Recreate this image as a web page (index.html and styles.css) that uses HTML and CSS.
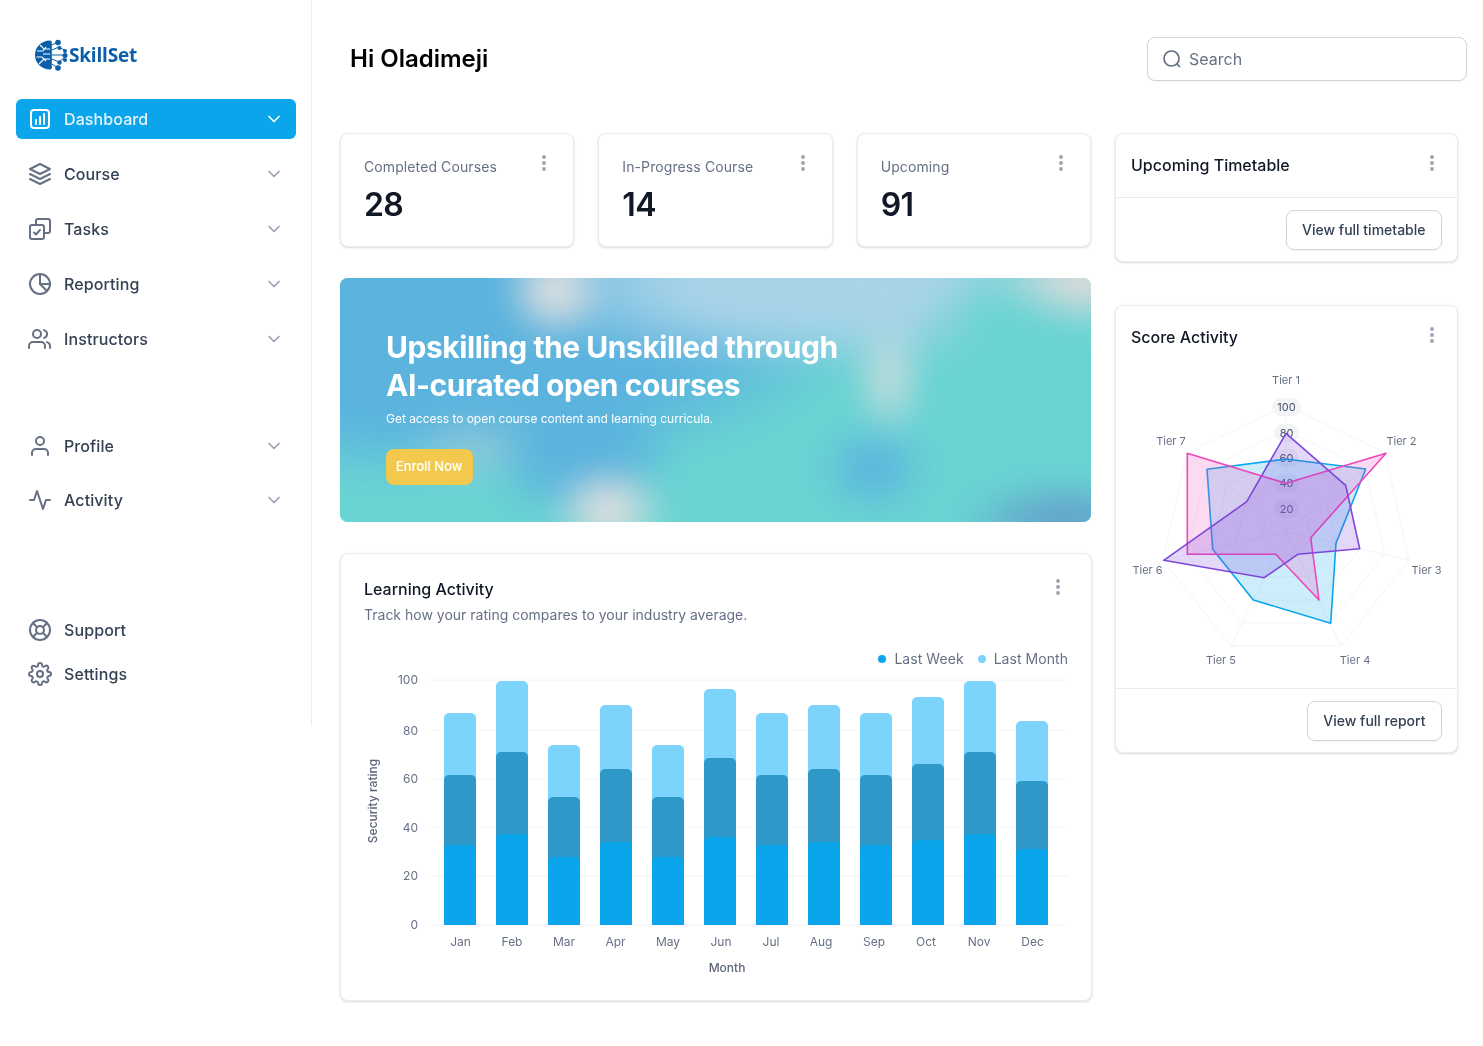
FILE: index.html
```html
<!DOCTYPE html>
<html>
<head>
  <meta charset="UTF-8">
  <title>SkillSet Dashboard</title>
  <link rel="stylesheet" href="styles.css">
</head>
<body>
  <svg class="defs" width="0" height="0">
    <symbol id="chevron" viewBox="0 0 20 20"><path d="M5 7.500l5 5 5-5"/></symbol>
    <symbol id="dots" viewBox="0 0 20 20">
      <circle cx="10" cy="4" r="1.900"/><circle cx="10" cy="10" r="1.900"/><circle cx="10" cy="16" r="1.900"/>
    </symbol>
    <clipPath id="barClip"><rect x="364" y="670" width="704" height="255"/></clipPath>
    <filter id="grain"><feTurbulence type="fractalNoise" baseFrequency="0.9" numOctaves="2"/><feColorMatrix type="saturate" values="0"/></filter>
  </svg>

  <div class="app">
    <aside class="sidebar">
      <div class="logo">
        <svg class="logo-mark" viewBox="0 0 34 32">
          <path class="logo-globe" d="M16 1.500C7.500 1.500 1 8 1 16s6.500 14.500 15 14.500c1 0 1.800-.8 1.800-1.800V3.300c0-1-.8-1.800-1.800-1.800z"/>
          <path class="logo-trace" d="M3 12h6l3-4M2.500 18H8l4 4M6 6l4 4h6M5 25l5-5h6M9 15h7"/>
          <path class="logo-link" d="M18 6l6-3M18 11l7-3M18 16h13M18 20l7 3M18 25l6 4M25 8l5 3M25 23l5-4"/>
          <circle class="logo-dot" cx="24" cy="3.500" r="2.800"/>
          <circle class="logo-dot" cx="25.500" cy="9" r="2"/>
          <circle class="logo-dot" cx="31" cy="12" r="2"/>
          <circle class="logo-dot" cx="31" cy="16.500" r="2.500"/>
          <circle class="logo-dot" cx="31" cy="21" r="2"/>
          <circle class="logo-dot" cx="25.500" cy="23.500" r="2.200"/>
          <circle class="logo-dot" cx="24" cy="29" r="2.800"/>
        </svg>
        <span class="logo-text">SkillSet</span>
      </div>

      <nav class="nav nav-main">
        <a class="nav-item active">
          <svg class="icon" viewBox="0 0 24 24"><rect x="3" y="3" width="18" height="18" rx="3"/><path d="M8 13v4M12 10v7M16 7v10"/></svg>
          <span>Dashboard</span>
          <svg class="chevron"><use href="#chevron"/></svg>
        </a>
        <a class="nav-item">
          <svg class="icon" viewBox="0 0 24 24"><path d="M12 2L2 7l10 5 10-5-10-5z"/><path d="M2 12l10 5 10-5"/><path d="M2 17l10 5 10-5"/></svg>
          <span>Course</span>
          <svg class="chevron"><use href="#chevron"/></svg>
        </a>
        <a class="nav-item">
          <svg class="icon" viewBox="0 0 24 24"><path d="M8 7.500V4a2 2 0 0 1 2-2h10a2 2 0 0 1 2 2v10a2 2 0 0 1-2 2h-3.500"/><rect x="2" y="8" width="14" height="14" rx="2"/><path d="M6 15.500l2 2 4-4.500"/></svg>
          <span>Tasks</span>
          <svg class="chevron"><use href="#chevron"/></svg>
        </a>
        <a class="nav-item">
          <svg class="icon" viewBox="0 0 24 24"><circle cx="12" cy="12" r="10"/><path d="M12 2v10h10"/><path d="M12 12l7 7"/></svg>
          <span>Reporting</span>
          <svg class="chevron"><use href="#chevron"/></svg>
        </a>
        <a class="nav-item">
          <svg class="icon" viewBox="0 0 24 24"><path d="M17 21v-2a4 4 0 0 0-4-4H5a4 4 0 0 0-4 4v2"/><circle cx="9" cy="7" r="4"/><path d="M22 21v-2a4 4 0 0 0-3-3.870"/><path d="M16 3.130a4 4 0 0 1 0 7.750"/></svg>
          <span>Instructors</span>
          <svg class="chevron"><use href="#chevron"/></svg>
        </a>
      </nav>

      <nav class="nav nav-account">
        <a class="nav-item">
          <svg class="icon" viewBox="0 0 24 24"><path d="M20 21v-2a4 4 0 0 0-4-4H8a4 4 0 0 0-4 4v2"/><circle cx="12" cy="7" r="4"/></svg>
          <span>Profile</span>
          <svg class="chevron"><use href="#chevron"/></svg>
        </a>
        <a class="nav-item">
          <svg class="icon" viewBox="0 0 24 24"><path d="M22 12h-4l-3 9L9 3l-3 9H2"/></svg>
          <span>Activity</span>
          <svg class="chevron"><use href="#chevron"/></svg>
        </a>
      </nav>

      <nav class="nav nav-help">
        <a class="nav-item">
          <svg class="icon" viewBox="0 0 24 24"><circle cx="12" cy="12" r="10"/><circle cx="12" cy="12" r="4"/><path d="M4.930 4.930l4.240 4.240M14.830 14.830l4.240 4.240M14.830 9.170l4.240-4.240M4.930 19.070l4.240-4.240"/></svg>
          <span>Support</span>
        </a>
        <a class="nav-item">
          <svg class="icon" viewBox="0 0 24 24"><circle cx="12" cy="12" r="3"/><path d="M19.400 15a1.650 1.650 0 0 0 .33 1.820l.06.06a2 2 0 0 1 0 2.830 2 2 0 0 1-2.830 0l-.06-.06a1.650 1.650 0 0 0-1.820-.33 1.650 1.650 0 0 0-1 1.510V21a2 2 0 0 1-2 2 2 2 0 0 1-2-2v-.09A1.650 1.650 0 0 0 9 19.400a1.650 1.650 0 0 0-1.820.33l-.06.06a2 2 0 0 1-2.830 0 2 2 0 0 1 0-2.830l.06-.06a1.650 1.650 0 0 0 .33-1.820 1.650 1.650 0 0 0-1.510-1H3a2 2 0 0 1-2-2 2 2 0 0 1 2-2h.09A1.650 1.650 0 0 0 4.600 9a1.650 1.650 0 0 0-.33-1.820l-.06-.06a2 2 0 0 1 0-2.830 2 2 0 0 1 2.830 0l.06.06a1.650 1.650 0 0 0 1.820.33H9a1.650 1.650 0 0 0 1-1.510V3a2 2 0 0 1 2-2 2 2 0 0 1 2 2v.09a1.650 1.650 0 0 0 1 1.510 1.650 1.650 0 0 0 1.820-.33l.06-.06a2 2 0 0 1 2.830 0 2 2 0 0 1 0 2.830l-.06.06a1.650 1.650 0 0 0-.33 1.820V9a1.650 1.650 0 0 0 1.510 1H21a2 2 0 0 1 2 2 2 2 0 0 1-2 2h-.09a1.650 1.650 0 0 0-1.510 1z"/></svg>
          <span>Settings</span>
        </a>
      </nav>
    </aside>

    <main class="main">
      <header class="topbar">
        <h1>Hi Oladimeji</h1>
        <div class="search">
          <svg class="search-icon" viewBox="0 0 20 20"><circle cx="9.500" cy="9.500" r="7.500"/><path d="M17.500 17.500l-2.700-2.700"/></svg>
          <span>Search</span>
        </div>
      </header>

      <div class="content">
        <div class="left-col">
          <section class="stats">
            <div class="card stat">
              <div class="stat-top"><span>Completed Courses</span><svg class="more"><use href="#dots"/></svg></div>
              <div class="stat-value">28</div>
            </div>
            <div class="card stat">
              <div class="stat-top"><span>In-Progress Course</span><svg class="more"><use href="#dots"/></svg></div>
              <div class="stat-value">14</div>
            </div>
            <div class="card stat">
              <div class="stat-top"><span>Upcoming</span><svg class="more"><use href="#dots"/></svg></div>
              <div class="stat-value">91</div>
            </div>
          </section>

          <section class="banner">
            <div class="banner-bg"></div>
            <svg class="grain"><rect width="100%" height="100%" filter="url(#grain)"/></svg>
            <h2>Upskilling the Unskilled through<br>AI-curated open courses</h2>
            <p>Get access to open course content and learning curricula.</p>
            <a class="enroll">Enroll Now</a>
          </section>

          <section class="card activity">
            <div class="activity-head">
              <div>
                <h3>Learning Activity</h3>
                <p>Track how your rating compares to your industry average.</p>
              </div>
              <svg class="more"><use href="#dots"/></svg>
            </div>
            <div class="legend">
              <span class="legend-item"><i class="dot dot-week"></i>Last Week</span>
              <span class="legend-item"><i class="dot dot-month"></i>Last Month</span>
            </div>
            <svg class="bar-chart" viewBox="364 670 704 310">
              <g class="grid">
                <path d="M429 680H1068M429 730H1068M429 779H1068M429 827H1068M429 876H1068M429 925H1068"/>
              </g>
              <g class="axis">
                <text x="418" y="684" text-anchor="end">100</text>
                <text x="418" y="735" text-anchor="end">80</text>
                <text x="418" y="783" text-anchor="end">60</text>
                <text x="418" y="832" text-anchor="end">40</text>
                <text x="418" y="880" text-anchor="end">20</text>
                <text x="418" y="929" text-anchor="end">0</text>
              </g>
              <g clip-path="url(#barClip)">
                <g class="bar-light">
                  <rect x="444" y="713" width="32" height="230" rx="5"/>
                  <rect x="496" y="681" width="32" height="260" rx="5"/>
                  <rect x="548" y="745" width="32" height="200" rx="5"/>
                  <rect x="600" y="705" width="32" height="240" rx="5"/>
                  <rect x="652" y="745" width="32" height="200" rx="5"/>
                  <rect x="704" y="689" width="32" height="250" rx="5"/>
                  <rect x="756" y="713" width="32" height="230" rx="5"/>
                  <rect x="808" y="705" width="32" height="240" rx="5"/>
                  <rect x="860" y="713" width="32" height="230" rx="5"/>
                  <rect x="912" y="697" width="32" height="240" rx="5"/>
                  <rect x="964" y="681" width="32" height="260" rx="5"/>
                  <rect x="1016" y="721" width="32" height="220" rx="5"/>
                </g>
                <g class="bar-mid">
                  <rect x="444" y="775" width="32" height="170" rx="5"/>
                  <rect x="496" y="752" width="32" height="190" rx="5"/>
                  <rect x="548" y="797" width="32" height="150" rx="5"/>
                  <rect x="600" y="769" width="32" height="170" rx="5"/>
                  <rect x="652" y="797" width="32" height="150" rx="5"/>
                  <rect x="704" y="758" width="32" height="190" rx="5"/>
                  <rect x="756" y="775" width="32" height="170" rx="5"/>
                  <rect x="808" y="769" width="32" height="170" rx="5"/>
                  <rect x="860" y="775" width="32" height="170" rx="5"/>
                  <rect x="912" y="764" width="32" height="180" rx="5"/>
                  <rect x="964" y="752" width="32" height="190" rx="5"/>
                  <rect x="1016" y="781" width="32" height="160" rx="5"/>
                </g>
                <g class="bar-base">
                  <rect x="444" y="845" width="32" height="100" rx="5"/>
                  <rect x="496" y="834" width="32" height="110" rx="5"/>
                  <rect x="548" y="857" width="32" height="90" rx="5"/>
                  <rect x="600" y="842" width="32" height="100" rx="5"/>
                  <rect x="652" y="857" width="32" height="90" rx="5"/>
                  <rect x="704" y="837" width="32" height="110" rx="5"/>
                  <rect x="756" y="845" width="32" height="100" rx="5"/>
                  <rect x="808" y="842" width="32" height="100" rx="5"/>
                  <rect x="860" y="845" width="32" height="100" rx="5"/>
                  <rect x="912" y="840" width="32" height="100" rx="5"/>
                  <rect x="964" y="834" width="32" height="110" rx="5"/>
                  <rect x="1016" y="849" width="32" height="90" rx="5"/>
                </g>
              </g>
              <g class="axis" text-anchor="middle">
                <text x="460.500" y="946">Jan</text>
                <text x="512" y="946">Feb</text>
                <text x="564" y="946">Mar</text>
                <text x="615.500" y="946">Apr</text>
                <text x="668" y="946">May</text>
                <text x="721" y="946">Jun</text>
                <text x="771" y="946">Jul</text>
                <text x="821" y="946">Aug</text>
                <text x="874" y="946">Sep</text>
                <text x="926" y="946">Oct</text>
                <text x="979" y="946">Nov</text>
                <text x="1032.500" y="946">Dec</text>
              </g>
              <text class="axis-title" x="727" y="972" text-anchor="middle">Month</text>
              <text class="axis-title" transform="translate(377 801) rotate(-90)" text-anchor="middle">Security rating</text>
            </svg>
          </section>
        </div>

        <div class="right-col">
          <section class="card side-card">
            <div class="side-head divided">
              <h3>Upcoming Timetable</h3>
              <svg class="more"><use href="#dots"/></svg>
            </div>
            <div class="side-foot"><a class="btn">View full timetable</a></div>
          </section>

          <section class="card side-card">
            <div class="side-head">
              <h3>Score Activity</h3>
              <svg class="more"><use href="#dots"/></svg>
            </div>
            <svg class="radar" viewBox="1116 365 341 323">
              <g class="radar-grid">
                <polygon points="1286,405 1385,453 1409,560 1341,646 1231,646 1163,560 1187,453"/>
                <polygon points="1286,430 1365,469 1385,554 1330,623 1242,623 1187,554 1207,469"/>
                <polygon points="1286,456 1345,485 1360,549 1319,600 1253,600 1212,549 1227,485"/>
                <polygon points="1286,481 1326,501 1336,543 1308,577 1264,577 1236,543 1246,501"/>
                <polygon points="1286,507 1306,516 1311,538 1297,555 1275,555 1261,538 1266,516"/>
                <path d="M1286 532V405M1286 532L1385 453M1286 532L1409 560M1286 532L1341 646M1286 532L1231 646M1286 532L1163 560M1286 532L1187 453"/>
              </g>
              <g class="radar-pills">
                <rect x="1272" y="398" width="29" height="18" rx="9"/>
                <rect x="1274" y="424" width="25" height="18" rx="9"/>
                <rect x="1274" y="449" width="25" height="18" rx="9"/>
                <rect x="1274" y="474" width="25" height="18" rx="9"/>
                <rect x="1274" y="500" width="25" height="18" rx="9"/>
              </g>
              <g class="radar-scale" text-anchor="middle">
                <text x="1286.500" y="411">100</text>
                <text x="1286.500" y="437">80</text>
                <text x="1286.500" y="462">60</text>
                <text x="1286.500" y="487">40</text>
                <text x="1286.500" y="513">20</text>
              </g>
              <polygon class="series series-blue" points="1286,459 1365.700,469 1336,543.300 1330.700,623.300 1253.300,600 1212.700,549.300 1207,469.300"/>
              <polygon class="series series-pink" points="1286,483.300 1386,453.300 1310.700,537.700 1319,600 1275.700,554.300 1187.300,554.300 1187.300,453.300"/>
              <polygon class="series series-purple" points="1286,433.300 1345.700,485.300 1359.700,548.700 1297.700,554.300 1264.300,577.700 1163.700,560.300 1246.700,501.700"/>
              <g class="radar-labels" text-anchor="middle">
                <text x="1286" y="384">Tier 1</text>
                <text x="1401.500" y="445">Tier 2</text>
                <text x="1426.500" y="574">Tier 3</text>
                <text x="1355" y="664">Tier 4</text>
                <text x="1221" y="664">Tier 5</text>
                <text x="1147.500" y="574">Tier 6</text>
                <text x="1171" y="445">Tier 7</text>
              </g>
            </svg>
            <div class="side-foot divided-top"><a class="btn">View full report</a></div>
          </section>
        </div>
      </div>
    </main>
  </div>
</body>
</html>
```

FILE: styles.css
```css
* {
  box-sizing: border-box;
}
body {
  margin: 0;
  background-color: #fff;
  color: #101828;
  font-family: "Inter", "Liberation Sans", sans-serif;
}
h1, h2, h3, p {
  margin: 0;
}
.defs {
  position: absolute;
}
.app {
  display: flex;
  align-items: flex-start;
}

/* sidebar */
.sidebar {
  flex: 0 0 312px;
  height: 726px;
  padding: 39px 15px 0 16px;
  border-right: 1px solid #eaecf0;
}
.logo {
  display: flex;
  align-items: center;
  margin-left: 18px;
  height: 32px;
}
.logo-mark {
  width: 34px;
  height: 32px;
}
.logo-globe {
  fill: #0b5ea8;
}
.logo-trace {
  fill: none;
  stroke: #fff;
  stroke-width: 1.1;
}
.logo-link {
  fill: none;
  stroke: #0b5ea8;
  stroke-width: 1;
}
.logo-dot {
  fill: #0b5ea8;
}
.logo-text {
  margin-left: 1px;
  color: #0b5ea8;
  font-family: "Open Sans", sans-serif;
  font-size: 19px;
  font-weight: 700;
  letter-spacing: -0.2px;
}
.nav {
  display: flex;
  flex-direction: column;
  gap: 15px;
}
.nav-main {
  margin-top: 28px;
}
.nav-account {
  margin-top: 67px;
  gap: 14px;
}
.nav-help {
  margin-top: 90px;
  gap: 4px;
}
.nav-item {
  display: flex;
  align-items: center;
  height: 40px;
  padding: 0 12px;
  gap: 12px;
  border-radius: 6px;
  color: #344054;
  font-size: 16px;
  font-weight: 500;
  letter-spacing: 0.1px;
}
.nav-item span {
  flex: 1;
}
.icon {
  width: 24px;
  height: 24px;
  fill: none;
  stroke: #667085;
  stroke-width: 2;
  stroke-linecap: round;
  stroke-linejoin: round;
}
.chevron {
  width: 20px;
  height: 20px;
  fill: none;
  stroke: #98a2b3;
  stroke-width: 1.67;
  stroke-linecap: round;
  stroke-linejoin: round;
}
.nav-item.active {
  background-color: #0ba5ec;
  color: #e8f4fd;
}
.active .icon, .active .chevron {
  stroke: #fff;
}

/* main area */
.main {
  flex: 1;
  padding: 37px 16px 44px 28px;
}
.topbar {
  display: flex;
  align-items: center;
  justify-content: space-between;
  margin-bottom: 52px;
}
.topbar h1 {
  padding: 0 0 2px 10px;
  color: #000;
  font-size: 24px;
  font-weight: 600;
}
.search {
  display: flex;
  align-items: center;
  width: 320px;
  height: 44px;
  padding: 0 14px;
  gap: 7px;
  border: 1px solid #d0d5dd;
  border-radius: 8px;
  color: #667085;
  font-size: 16px;
  box-shadow: 0 1px 2px rgba(16, 24, 40, 0.05);
}
.search-icon {
  width: 20px;
  height: 20px;
  fill: none;
  stroke: #667085;
  stroke-width: 1.67;
  stroke-linecap: round;
}
.content {
  display: grid;
  grid-template-columns: 751px 343px;
  gap: 24px;
  align-items: start;
}
.left-col {
  display: flex;
  flex-direction: column;
  gap: 31px;
}
.right-col {
  display: flex;
  flex-direction: column;
  gap: 43px;
}
.card {
  background-color: #fff;
  border: 1px solid #eaecf0;
  border-radius: 8px;
  box-shadow: 0 1px 3px rgba(16, 24, 40, 0.1), 0 1px 2px rgba(16, 24, 40, 0.06);
}
.more {
  flex: none;
  width: 20px;
  height: 20px;
  fill: #98a2b3;
}

/* stat cards */
.stats {
  display: grid;
  grid-template-columns: repeat(3, 1fr);
  gap: 24px;
}
.stat {
  height: 114px;
  padding: 23px 19px 0 23px;
}
.stat-top {
  display: flex;
  justify-content: space-between;
  color: #667085;
  font-size: 14px;
  line-height: 20px;
  letter-spacing: 0.1px;
}
.stat-top .more {
  margin-top: -4px;
}
.stat-value {
  margin-top: 8px;
  font-size: 32px;
  font-weight: 600;
  line-height: 40px;
  letter-spacing: -0.64px;
}

/* banner */
.banner {
  position: relative;
  overflow: hidden;
  height: 244px;
  padding: 50px 46px 0;
  border-radius: 8px;
  color: #fff;
  background-color: #66d2d2;
}
/* blurred colour mesh, 30px larger than the banner on every side */
.banner-bg {
  position: absolute;
  top: -30px;
  left: -30px;
  right: -30px;
  bottom: -30px;
  filter: blur(14px);
  background-color: #66d2d2;
  background-image:
    radial-gradient(ellipse 52px 52px at 245px 42px, rgba(222, 222, 222, 1) 20%, rgba(222, 222, 222, 0)),
    radial-gradient(ellipse 60px 48px at 298px 262px, rgba(222, 222, 222, 1) 20%, rgba(222, 222, 222, 0)),
    radial-gradient(ellipse 36px 62px at 579px 130px, rgba(205, 220, 222, 0.9) 15%, rgba(205, 220, 222, 0)),
    radial-gradient(ellipse 100px 50px at 782px 30px, rgba(218, 218, 218, 1) 25%, rgba(218, 218, 218, 0)),
    radial-gradient(ellipse 110px 44px at 755px 274px, rgba(96, 160, 200, 1) 25%, rgba(96, 160, 200, 0)),
    radial-gradient(ellipse 58px 50px at 564px 220px, rgba(88, 177, 221, 0.95) 20%, rgba(88, 177, 221, 0)),
    radial-gradient(ellipse 70px 40px at 160px 200px, rgba(170, 210, 215, 0.6), rgba(170, 210, 215, 0)),
    radial-gradient(ellipse 110px 85px at 715px 85px, rgba(102, 210, 210, 1) 35%, rgba(102, 210, 210, 0)),
    radial-gradient(ellipse 320px 90px at 510px 35px, rgba(165, 210, 232, 1) 45%, rgba(165, 210, 232, 0)),
    radial-gradient(ellipse 100px 75px at 270px 205px, rgba(88, 177, 221, 1) 40%, rgba(88, 177, 221, 0)),
    radial-gradient(ellipse 440px 180px at 130px 60px, rgba(88, 177, 221, 1) 65%, rgba(88, 177, 221, 0));
}
.grain {
  position: absolute;
  top: 0;
  left: 0;
  width: 100%;
  height: 100%;
  opacity: 0.14;
  mix-blend-mode: overlay;
}
.banner h2, .banner p, .enroll {
  position: relative;
}
.banner h2 {
  font-size: 30px;
  font-weight: 700;
  line-height: 38px;
  letter-spacing: -0.45px;
}
.banner p {
  margin-top: 6px;
  font-size: 12px;
  line-height: 18px;
  letter-spacing: -0.03px;
}
.enroll {
  display: inline-flex;
  align-items: center;
  height: 36px;
  margin-top: 21px;
  padding: 0 10px 2px;
  border-radius: 8px;
  background-color: #f2c94c;
  font-size: 13px;
  font-weight: 500;
}

/* learning activity */
.activity {
  width: 752px;
  height: 448px;
  padding: 23px 23px 0;
}
.activity-head {
  display: flex;
  justify-content: space-between;
}
.activity-head h3 {
  font-size: 16px;
  font-weight: 500;
  line-height: 24px;
}
.activity-head p {
  margin-top: 4px;
  color: #667085;
  font-size: 14px;
  line-height: 20px;
}
.legend {
  display: flex;
  justify-content: flex-end;
  gap: 14px;
  margin-top: 24px;
  color: #667085;
  font-size: 14px;
  line-height: 20px;
  letter-spacing: 0.05px;
}
.legend-item {
  display: flex;
  align-items: center;
  gap: 8px;
}
.dot {
  width: 8px;
  height: 8px;
  border-radius: 50%;
}
.dot-week {
  background-color: #0ba5ec;
}
.dot-month {
  background-color: #7cd4fd;
}
.bar-chart {
  display: block;
  width: 704px;
  height: 310px;
  margin-top: 1px;
}
.grid path {
  fill: none;
  stroke: #f2f4f7;
}
.axis text {
  fill: #667085;
  font-size: 12px;
}
.axis-title {
  fill: #5b6478;
  font-size: 12px;
  font-weight: 500;
}
.bar-light {
  fill: #7cd4fd;
}
.bar-mid {
  fill: #2e98c8;
}
.bar-base {
  fill: #0ba5ec;
}

/* right column */
.side-head {
  display: flex;
  align-items: flex-start;
  justify-content: space-between;
  padding: 19px 15px 0;
  height: 59px;
}
.side-head.divided {
  height: 64px;
  border-bottom: 1px solid #eaecf0;
}
.side-head h3 {
  font-size: 16px;
  font-weight: 500;
  line-height: 24px;
}
.side-foot {
  display: flex;
  justify-content: flex-end;
  padding: 12px 15px 11px;
}
.divided-top {
  border-top: 1px solid #eaecf0;
}
.btn {
  display: inline-flex;
  align-items: center;
  height: 40px;
  padding: 0 15.5px 1px;
  border: 1px solid #d0d5dd;
  border-radius: 8px;
  color: #344054;
  font-size: 14px;
  font-weight: 500;
  box-shadow: 0 1px 2px rgba(16, 24, 40, 0.05);
}
.radar {
  display: block;
  width: 341px;
  height: 323px;
}
.radar-grid polygon, .radar-grid path {
  fill: none;
  stroke: #f2f4f7;
}
.radar-pills {
  fill: #f2f4f7;
}
.radar-scale text {
  fill: #475467;
  font-size: 11px;
}
.radar-labels text {
  fill: #667085;
  font-size: 11px;
}
.series {
  stroke-width: 1.6;
  stroke-linejoin: round;
}
.series-blue {
  fill: rgba(11, 165, 236, 0.2);
  stroke: #0ba5ec;
}
.series-pink {
  fill: rgba(238, 70, 188, 0.2);
  stroke: #ee46bc;
}
.series-purple {
  fill: rgba(122, 62, 220, 0.2);
  stroke: #7f47d9;
}
```
